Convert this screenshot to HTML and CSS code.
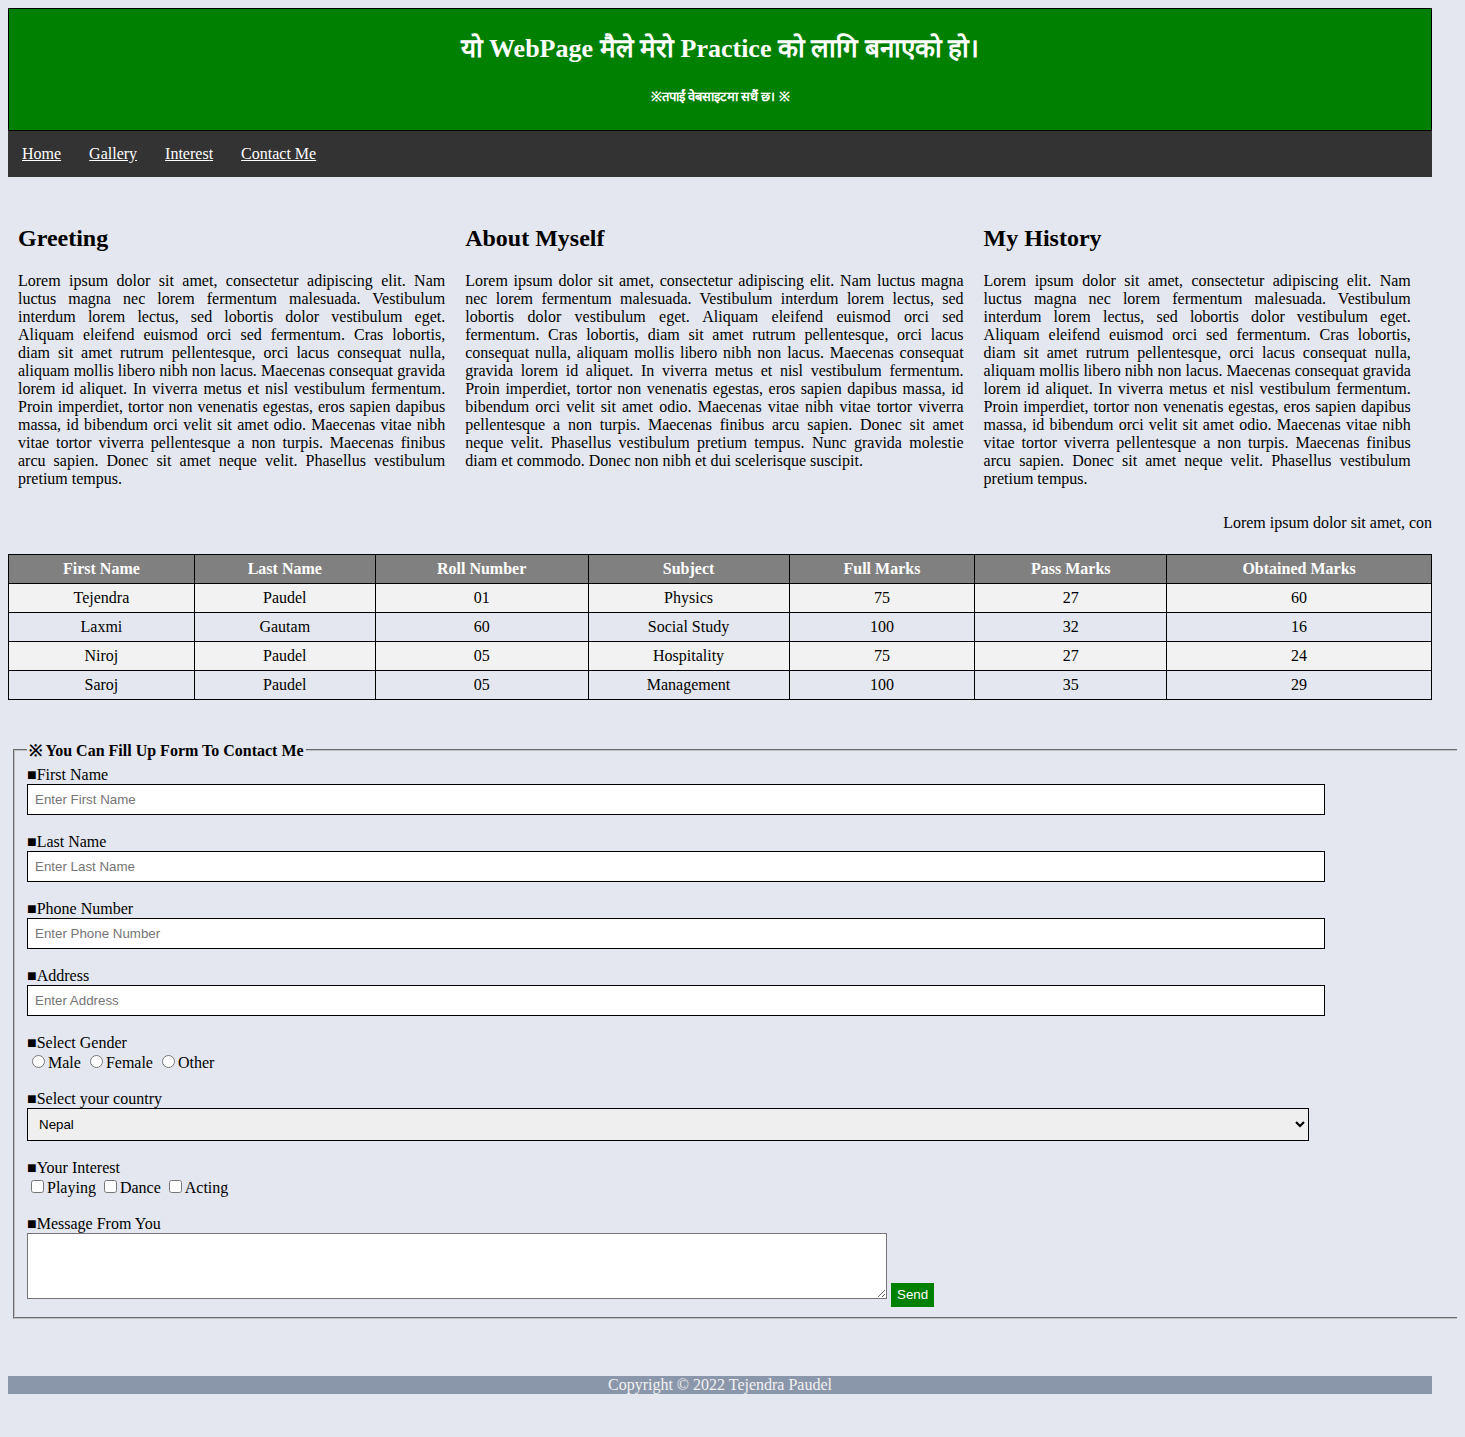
FILE: index.html
```html
<!DOCTYPE html>
<html lang="en">
<head>
<meta charset="utf-8">
<title>My WebPage</title>
<link rel="stylesheet" href="styles.css">
</head>
<body>
<div class="page">
  <header class="header">
    <h1 class="title">यो WebPage मैले मेरो Practice को लागि बनाएको हो।</h1>
    <p class="subtitle">※तपाईं वेबसाइटमा सधैं छ। ※</p>
  </header>
  <nav class="nav">
    <a href="#" class="nav-link">Home</a>
    <a href="#" class="nav-link">Gallery</a>
    <a href="#" class="nav-link">Interest</a>
    <a href="#" class="nav-link">Contact Me</a>
  </nav>

  <section class="columns">
    <div class="col col-side">
      <h2 class="col-title">Greeting</h2>
      <p class="col-text">Lorem ipsum dolor sit amet, consectetur adipiscing elit. Nam luctus magna nec lorem fermentum malesuada. Vestibulum interdum lorem lectus, sed lobortis dolor vestibulum eget. Aliquam eleifend euismod orci sed fermentum. Cras lobortis, diam sit amet rutrum pellentesque, orci lacus consequat nulla, aliquam mollis libero nibh non lacus. Maecenas consequat gravida lorem id aliquet. In viverra metus et nisl vestibulum fermentum. Proin imperdiet, tortor non venenatis egestas, eros sapien dapibus massa, id bibendum orci velit sit amet odio. Maecenas vitae nibh vitae tortor viverra pellentesque a non turpis. Maecenas finibus arcu sapien. Donec sit amet neque velit. Phasellus vestibulum pretium tempus.</p>
    </div>
    <div class="col col-mid">
      <h2 class="col-title">About Myself</h2>
      <p class="col-text">Lorem ipsum dolor sit amet, consectetur adipiscing elit. Nam luctus magna nec lorem fermentum malesuada. Vestibulum interdum lorem lectus, sed lobortis dolor vestibulum eget. Aliquam eleifend euismod orci sed fermentum. Cras lobortis, diam sit amet rutrum pellentesque, orci lacus consequat nulla, aliquam mollis libero nibh non lacus. Maecenas consequat gravida lorem id aliquet. In viverra metus et nisl vestibulum fermentum. Proin imperdiet, tortor non venenatis egestas, eros sapien dapibus massa, id bibendum orci velit sit amet odio. Maecenas vitae nibh vitae tortor viverra pellentesque a non turpis. Maecenas finibus arcu sapien. Donec sit amet neque velit. Phasellus vestibulum pretium tempus. Nunc gravida molestie diam et commodo. Donec non nibh et dui scelerisque suscipit.</p>
    </div>
    <div class="col col-side">
      <h2 class="col-title">My History</h2>
      <p class="col-text">Lorem ipsum dolor sit amet, consectetur adipiscing elit. Nam luctus magna nec lorem fermentum malesuada. Vestibulum interdum lorem lectus, sed lobortis dolor vestibulum eget. Aliquam eleifend euismod orci sed fermentum. Cras lobortis, diam sit amet rutrum pellentesque, orci lacus consequat nulla, aliquam mollis libero nibh non lacus. Maecenas consequat gravida lorem id aliquet. In viverra metus et nisl vestibulum fermentum. Proin imperdiet, tortor non venenatis egestas, eros sapien dapibus massa, id bibendum orci velit sit amet odio. Maecenas vitae nibh vitae tortor viverra pellentesque a non turpis. Maecenas finibus arcu sapien. Donec sit amet neque velit. Phasellus vestibulum pretium tempus.</p>
    </div>
  </section>

  <div class="ticker">Lorem ipsum dolor sit amet, con</div>

  <table class="marks">
    <thead>
      <tr>
        <th class="c1">First Name</th>
        <th class="c2">Last Name</th>
        <th class="c3">Roll Number</th>
        <th class="c4">Subject</th>
        <th class="c5">Full Marks</th>
        <th class="c6">Pass Marks</th>
        <th class="c7">Obtained Marks</th>
      </tr>
    </thead>
    <tbody>
      <tr class="row-odd"><td>Tejendra</td><td>Paudel</td><td>01</td><td>Physics</td><td>75</td><td>27</td><td>60</td></tr>
      <tr class="row-even"><td>Laxmi</td><td>Gautam</td><td>60</td><td>Social Study</td><td>100</td><td>32</td><td>16</td></tr>
      <tr class="row-odd"><td>Niroj</td><td>Paudel</td><td>05</td><td>Hospitality</td><td>75</td><td>27</td><td>24</td></tr>
      <tr class="row-even"><td>Saroj</td><td>Paudel</td><td>05</td><td>Management</td><td>100</td><td>35</td><td>29</td></tr>
    </tbody>
  </table>

  <form class="contact">
    <fieldset class="contact-set">
      <legend class="contact-legend">※ You Can Fill Up Form To Contact Me</legend>

      <div class="field">
        <label class="field-label" for="fname">■First Name</label>
        <input class="text-input" id="fname" type="text" placeholder="Enter First Name">
      </div>
      <div class="field">
        <label class="field-label" for="lname">■Last Name</label>
        <input class="text-input" id="lname" type="text" placeholder="Enter Last Name">
      </div>
      <div class="field">
        <label class="field-label" for="phone">■Phone Number</label>
        <input class="text-input" id="phone" type="text" placeholder="Enter Phone Number">
      </div>
      <div class="field">
        <label class="field-label" for="addr">■Address</label>
        <input class="text-input" id="addr" type="text" placeholder="Enter Address">
      </div>
      <div class="field">
        <span class="field-label">■Select Gender</span>
        <div class="choice-row"><input type="radio" name="g" class="radio" id="m"><label for="m">Male</label> <input type="radio" name="g" class="radio" id="f"><label for="f">Female</label> <input type="radio" name="g" class="radio" id="o"><label for="o">Other</label></div>
      </div>
      <div class="field">
        <label class="field-label" for="country">■Select your country</label>
        <select class="country" id="country">
          <option>Nepal</option>
          <option>India</option>
          <option>China</option>
        </select>
      </div>
      <div class="field">
        <span class="field-label">■Your Interest</span>
        <div class="choice-row"><input type="checkbox" class="check" id="p"><label for="p">Playing</label> <input type="checkbox" class="check" id="d"><label for="d">Dance</label> <input type="checkbox" class="check" id="a"><label for="a">Acting</label></div>
      </div>
      <div class="field field-last">
        <label class="field-label" for="msg">■Message From You</label>
        <div class="msg-row"><textarea class="message" id="msg"></textarea> <button type="button" class="send">Send</button></div>
      </div>
    </fieldset>
  </form>

  <footer class="footer">Copyright © 2022 Tejendra Paudel</footer>
</div>
</body>
</html>
```
FILE: styles.css
```css
html {
  background: #e4e7ef;
  overflow-x: hidden;
}
body {
  margin: 8px;
  font-family: "Liberation Serif", "Times New Roman", serif;
  font-size: 16px;
  color: #000;
  background: #e4e7ef;
}
.page {
  width: 1424px;
}
.header {
  background: #008000;
  border: 1px solid #000;
  color: #fff;
  text-align: center;
}
.title {
  margin: 25px 0;
  font-size: 26px;
  line-height: 30px;
  font-weight: bold;
}
.subtitle {
  margin: 25px 0;
  font-size: 13px;
  line-height: 16px;
  font-weight: bold;
}
.nav {
  display: flex;
  background: #333;
}
.nav-link {
  display: block;
  padding: 14px 14px;
  line-height: 18px;
  color: #fff;
  text-decoration: underline;
}
.columns {
  display: flex;
  margin-top: 18px;
}
.col {
  flex: none;
  padding: 10px;
}
.col-side {
  width: 30%;
}
.col-mid {
  width: 35%;
}
.col-title {
  margin: 20px 0;
  font-size: 24px;
}
.col-text {
  margin: 0 0 16px;
  text-align: justify;
}
.ticker {
  text-align: right;
  height: 18px;
  line-height: 18px;
  white-space: nowrap;
  overflow: hidden;
}
.marks {
  margin-top: 22px;
  width: 100%;
  border-collapse: collapse;
  border: 1px solid #000;
}
.marks th,
.marks td {
  border: 1px solid #000;
  padding: 5px;
  text-align: center;
  line-height: 18px;
}
.marks th {
  background: #808080;
  color: #fff;
  font-weight: bold;
}
.c1 { width: 13.06%; }
.c2 { width: 12.71%; }
.c3 { width: 14.96%; }
.c4 { width: 14.12%; }
.c5 { width: 13.06%; }
.c6 { width: 13.48%; }
.row-odd {
  background: #f2f2f2;
}
.contact {
  margin-top: 39px;
}
.contact-set {
  margin: 0 5px;
  width: 100%;
  padding: 5px 12px 10px;
  border: 2px groove #c0c0c0;
}
.contact-legend {
  font-weight: bold;
  padding: 0 2px;
}
.field {
  margin-bottom: 18px;
}
.field-last {
  margin-bottom: 0;
}
.field-label {
  display: block;
  line-height: 18px;
}
.text-input {
  display: block;
  width: 1282px;
  padding: 7px 7px;
  border: 1px solid #000;
  font-family: "Liberation Sans", Arial, sans-serif;
  font-size: 13.33px;
  line-height: 15px;
  background: #fff;
}
.choice-row {
  line-height: 18px;
}
.radio {
  margin: 3px 3px 0 5px;
}
.check {
  margin: 3px 3px 3px 4px;
}
.country {
  display: block;
  width: 1282px;
  padding: 7px 7px;
  border: 1px solid #000;
  background: #efefef;
  font-family: "Liberation Sans", Arial, sans-serif;
  font-size: 13.33px;
  color: #000;
}
.msg-row {
  line-height: 18px;
}
.message {
  width: 860px;
  height: 66px;
  box-sizing: border-box;
  border: 1px solid #767676;
  margin: 0;
  background: #fff;
  vertical-align: baseline;
}
.send {
  background: #008000;
  color: #fff;
  border: none;
  padding: 5px 6px;
  line-height: 14px;
  font-family: "Liberation Sans", Arial, sans-serif;
  font-size: 13.33px;
}
.footer {
  margin-top: 57px;
  background: #8a97aa;
  color: #f2f2f2;
  text-align: center;
  line-height: 18px;
}
```
